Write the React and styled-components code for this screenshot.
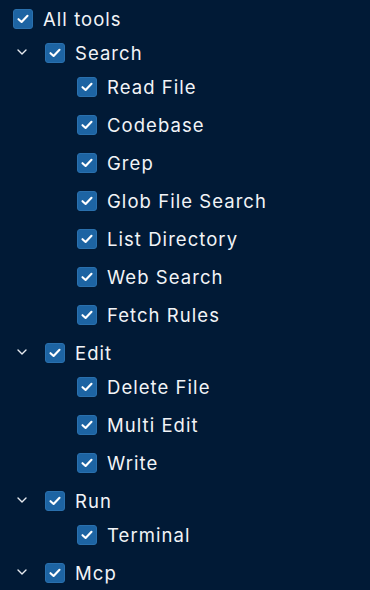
import React from "react";
import styled, { createGlobalStyle } from "styled-components";

const Global = createGlobalStyle`
  html, body { margin: 0; padding: 0; background: #011a36; }
  body { font-family: Inter, "Noto Sans", sans-serif; color: #f2f4f7; }
`;

const Tree = styled.div`
  display: flex;
  flex-direction: column;
  padding: 2px 0 0 13px;
`;

const Row = styled.label`
  display: flex;
  align-items: center;
  height: 34px;
  padding-left: ${(p) => p.$indent}px;
  gap: 10px;
  font-size: 18.5px;
  letter-spacing: 1.05px;
  cursor: pointer;
`;

const Chevron = styled.span`
  width: 18px;
  margin-left: -32px;
  margin-right: 4px;
  display: flex;
  justify-content: center;
  align-items: center;
  margin-top: -3px;
`;

const Box = styled.span`
  width: 20px;
  height: 20px;
  box-sizing: border-box;
  border-radius: 3px;
  background: #1d64a3;
  border: 1px solid #2a70ad;
  display: flex;
  align-items: center;
  justify-content: center;
  flex-shrink: 0;
`;

const Children = styled.div`
  display: flex;
  flex-direction: column;
  gap: 4px;
  padding-bottom: 4px;
`;

const Check = () => (
  <Box>
    <svg width="12" height="10" viewBox="0 0 12 10">
      <path d="M1.5 5.2 L4.6 8 L10.5 1.8" fill="none" stroke="#fff" strokeWidth="2.1" strokeLinecap="round" strokeLinejoin="round" />
    </svg>
  </Box>
);

const groups = [
  { name: "Search", items: ["Read File", "Codebase", "Grep", "Glob File Search", "List Directory", "Web Search", "Fetch Rules"] },
  { name: "Edit", items: ["Delete File", "Multi Edit", "Write"] },
  { name: "Run", items: ["Terminal"] },
  { name: "Mcp", items: [] },
];

export default function App() {
  return (
    <>
      <Global />
      <Tree>
        <Row $indent={0}>
          <Check />
          All tools
        </Row>
        {groups.map((g) => (
          <React.Fragment key={g.name}>
            <Row $indent={32}>
              <Chevron>
                <svg width="10" height="6" viewBox="0 0 10 6">
                  <path d="M1 1 L5 5 L9 1" fill="none" stroke="#e6e9ee" strokeWidth="1.4" strokeLinecap="round" strokeLinejoin="round" />
                </svg>
              </Chevron>
              <Check />
              {g.name}
            </Row>
            {g.items.length > 0 && (
              <Children>
                {g.items.map((it) => (
                  <Row key={it} $indent={64}>
                    <Check />
                    {it}
                  </Row>
                ))}
              </Children>
            )}
          </React.Fragment>
        ))}
      </Tree>
    </>
  );
}
